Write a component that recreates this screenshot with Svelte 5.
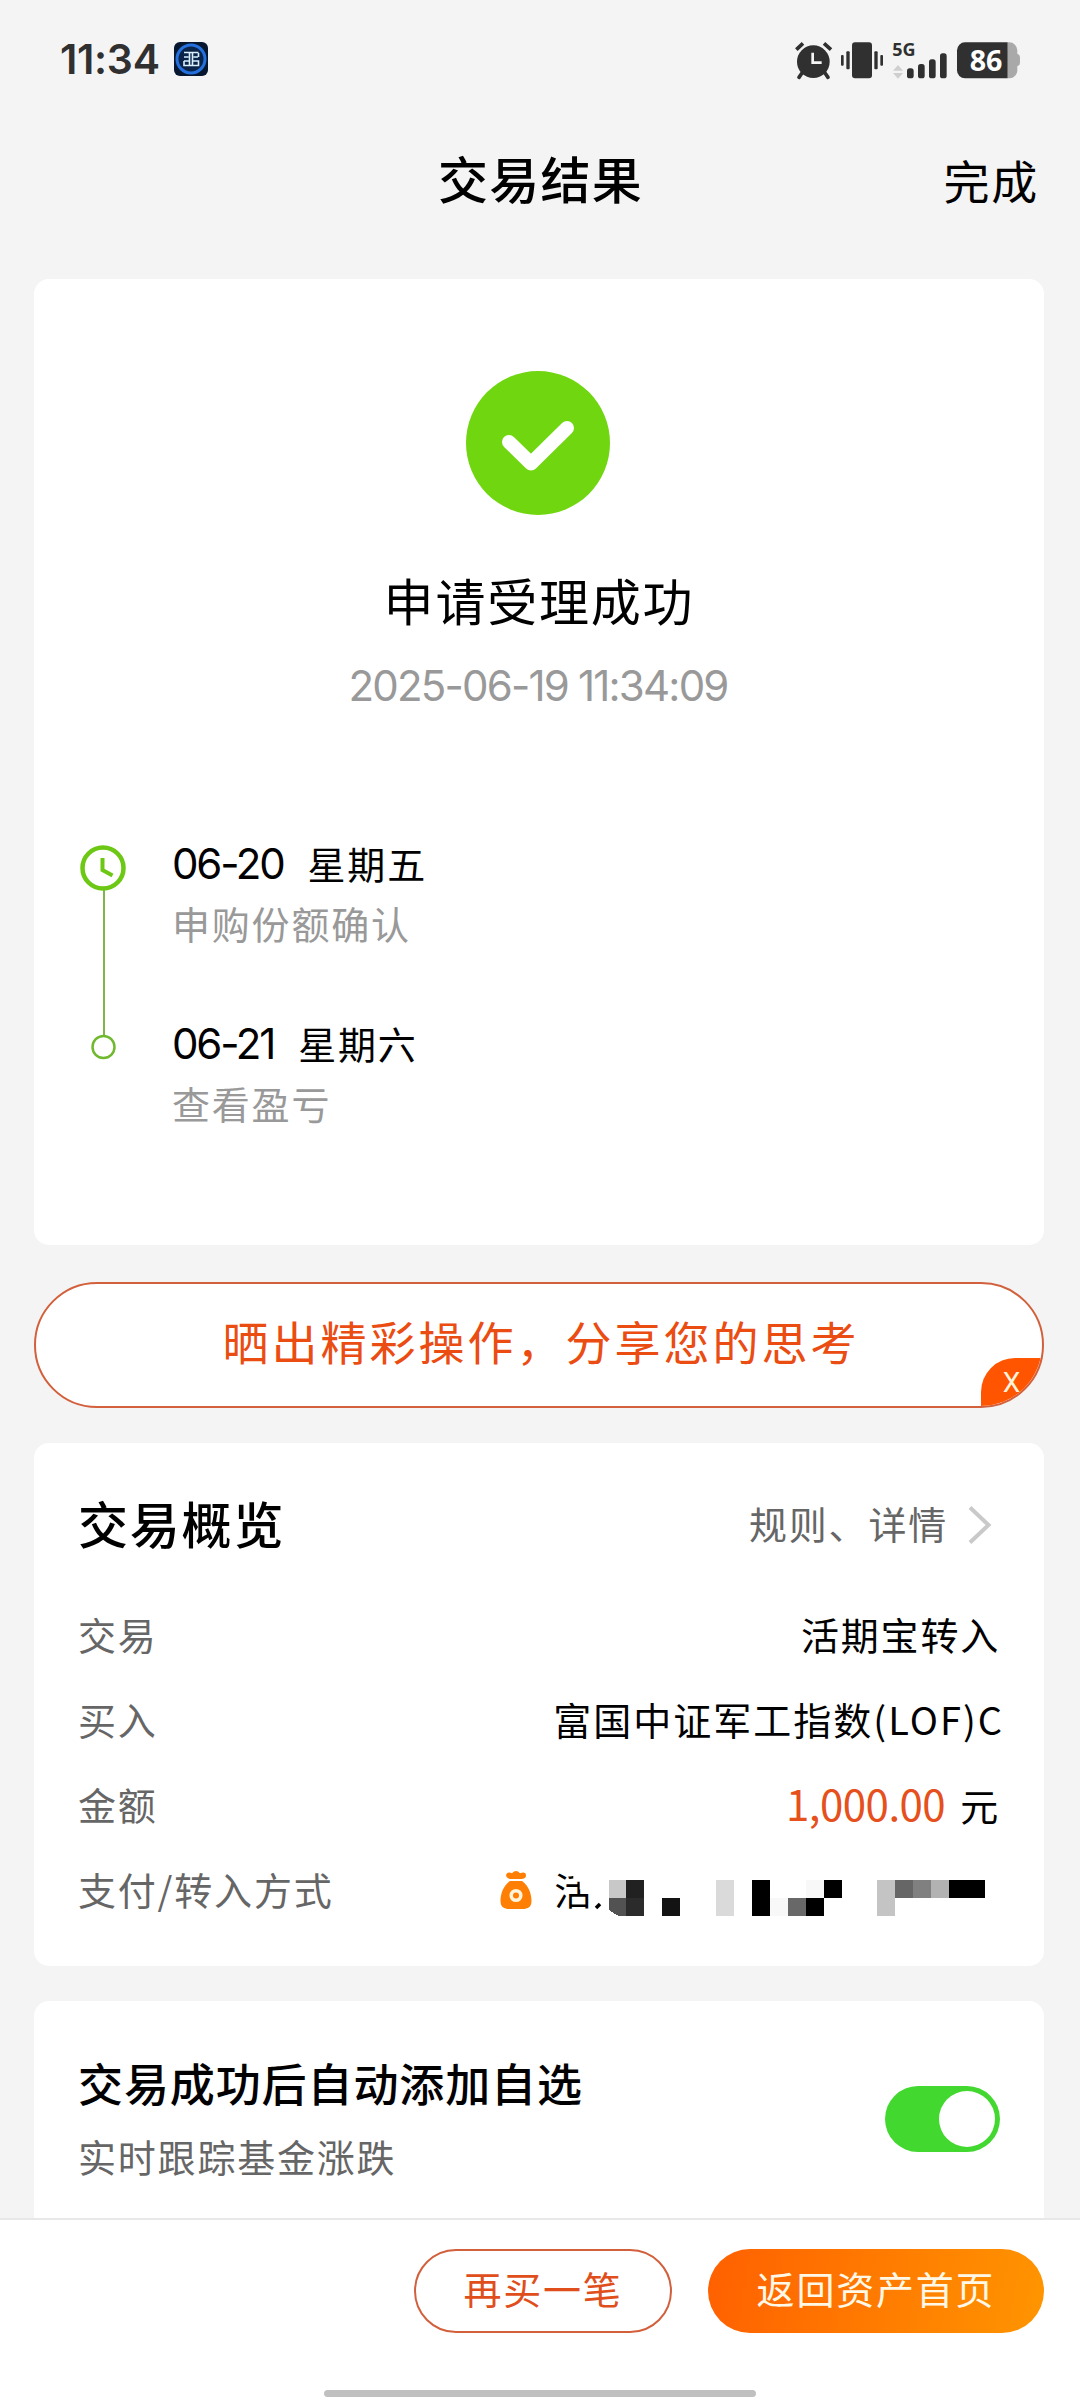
<script lang="ts">
	interface Step {
		date: string;
		weekday: string;
		note: string;
	}

	const steps: Step[] = [
		{ date: '06-20', weekday: '星期五', note: '申购份额确认' },
		{ date: '06-21', weekday: '星期六', note: '查看盈亏' }
	];

	// masked account name: [column, row, width, height, fill], one unit per tile
	const tiles: [number, number, number, number, string][] = [
		[0, 0, 1, 1, '#c8c8c8'],
		[1, 0, 1, 1, '#212121'],
		[1, 1, 1, 1, '#2b2b2b'],
		[3, 1, 1, 1, '#131313'],
		[6, 0, 1, 2, '#dadada'],
		[8, 0, 1, 2, '#000'],
		[9, 1, 1, 1, '#f8f8f8'],
		[10, 1, 1, 1, '#686868'],
		[11, 0, 1, 1, '#f8f8f8'],
		[11, 1, 1, 1, '#000'],
		[12, 0, 1, 1, '#000'],
		[15, 0, 1, 2, '#c4c4c4'],
		[16, 0, 1, 1, '#666'],
		[17, 0, 1, 1, '#808080'],
		[18, 0, 1, 1, '#b2b2b2'],
		[19, 0, 2, 1, '#000']
	];

	let autoWatch = $state(true);
	let bannerOpen = $state(true);
</script>

<div class="screen">
	<div class="status-bar">
		<span class="time">11:34</span>
		<svg class="app-icon" viewBox="0 0 34 34" aria-hidden="true">
			<rect width="34" height="34" rx="6" fill="#06172f" />
			<circle cx="17" cy="17" r="14" fill="#0a2348" stroke="#2470dc" stroke-width="3" />
			<path
				d="M10 10.500h14.500M10 15h4.500M19.500 15H24M24.500 11v4M15.500 11v12M18.500 11v12M10 19h5M19 19h5.500v4.500H10V19"
				fill="none"
				stroke="#d8f0ff"
				stroke-width="1.6"
			/>
		</svg>
		<div class="status-icons" aria-hidden="true">
			<svg class="alarm" viewBox="45 65 111 110" fill="none" stroke="#303030">
				<circle cx="100" cy="124" r="49" fill="#303030" stroke="none" />
				<path d="M49 88 69 69M132 69l21 19" stroke-width="11" />
				<path d="M66 158l-9 13M135 158l9 13" stroke-width="11" stroke-linecap="round" />
				<path d="M98 97v30h27" stroke="#f4f4f4" stroke-width="8" />
			</svg>
			<svg class="vibrate" viewBox="183 65 126 110" fill="#303030">
				<rect x="216" y="66" width="60" height="108" rx="9" />
				<rect x="199" y="93" width="10" height="54" rx="3" />
				<rect x="183" y="104" width="8" height="32" rx="3" />
				<rect x="283" y="93" width="10" height="54" rx="3" />
				<rect x="301" y="104" width="8" height="32" rx="3" />
			</svg>
			<svg class="signal" viewBox="336 65 165 110">
				<text x="337" y="107" font-size="54" font-weight="700" fill="#303030">5G</text>
				<path d="M339 151l15-17 15 17zM339 158l15 17 15-17z" fill="#cfcfcf" />
				<g fill="#303030">
					<rect x="381" y="144" width="20" height="30" rx="8" />
					<rect x="414" y="131" width="20" height="43" rx="8" />
					<rect x="447" y="117" width="20" height="57" rx="8" />
					<rect x="480" y="99" width="20" height="75" rx="8" />
				</g>
			</svg>
			<svg class="battery" viewBox="531 65 190 110">
				<path d="M683 66h5a24 24 0 0 1 24 24v10q8 2 8 10v18q0 8-8 10v10a24 24 0 0 1-24 26h-5z" fill="#a9a9a9" />
				<path d="M683 66H555a24 24 0 0 0-24 24v60a24 24 0 0 0 24 24h128z" fill="#303030" />
				<text x="569" y="151" font-size="86" font-weight="700" fill="#fff">86</text>
			</svg>
		</div>
	</div>

	<header class="nav-bar">
		<h1>交易结果</h1>
		<button type="button" class="done">完成</button>
	</header>

	<main>
		<section class="card result">
			<svg class="result-icon" viewBox="0 0 144 144" aria-hidden="true">
				<circle cx="72" cy="72" r="72" fill="#6fd60f" />
				<path
					d="M43 71 65 92.500 101 57"
					fill="none"
					stroke="#fff"
					stroke-width="14"
					stroke-linecap="round"
					stroke-linejoin="round"
				/>
			</svg>
			<h2>申请受理成功</h2>
			<time>2025-06-19 11:34:09</time>

			<div class="timeline">
				<svg class="rail" viewBox="0 0 48 220" fill="none" stroke="#6cc814" aria-hidden="true">
					<path d="M25 46v146" stroke="#7fb54a" stroke-width="2" />
					<circle cx="24" cy="24" r="20.500" stroke-width="4.500" />
					<path d="M23.500 14v12l10 5.500" stroke-width="4" />
					<circle cx="24.500" cy="203" r="11" stroke="#70b92e" stroke-width="2.500" />
				</svg>
				<ol>
					{#each steps as step (step.date)}
						<li>
							<p class="day"><b>{step.date}</b><span>{step.weekday}</span></p>
							<p class="note">{step.note}</p>
						</li>
					{/each}
				</ol>
			</div>
		</section>

		{#if bannerOpen}
			<div class="share-banner">
				<span>晒出精彩操作，分享您的思考</span>
				<button type="button" aria-label="关闭" onclick={() => (bannerOpen = false)}>X</button>
			</div>
		{/if}

		<section class="card overview">
			<div class="overview-head">
				<h2>交易概览</h2>
				<button type="button" class="details">
					规则、详情
					<svg viewBox="0 0 24 40" fill="none" stroke="#c9c9c9" stroke-width="4" aria-hidden="true">
						<path d="M2 2.500 20.500 20 2 37.500" />
					</svg>
				</button>
			</div>
			<dl>
				<div class="row">
					<dt>交易</dt>
					<dd>活期宝转入</dd>
				</div>
				<div class="row">
					<dt>买入</dt>
					<dd class="fund">富国中证军工指数(LOF)C</dd>
				</div>
				<div class="row">
					<dt>金额</dt>
					<dd><span class="amount">1,000.00</span>元</dd>
				</div>
				<div class="row">
					<dt>支付/转入方式</dt>
					<dd class="account">
						<svg class="bag" viewBox="0 0 32 40" aria-hidden="true">
							<path
								d="M10 9C5 8 5 3 9 2.500q2 0 3 .7Q16-1 20 3.200q6-2 6 2.300 0 3-4 3.500zM10 11h12c7 5 9.500 13 9.500 20 0 6-3.500 8-9 8h-13C4 39 .5 37 .5 31 .5 24 3 16 10 11z"
								fill="#ff7f05"
							/>
							<circle cx="16" cy="25.500" r="4.800" fill="none" stroke="#fff5dc" stroke-width="3.500" />
							<circle cx="16" cy="25.500" r="2" fill="#ff7f05" />
						</svg>
						<span class="clipped">活</span>
						<svg class="mosaic" viewBox="0 0 392 36" aria-hidden="true">
							<path d="M3 28 7 24" stroke="#000" stroke-width="3.500" />
							<g transform="translate(15.500 0) scale(17.930 18)" shape-rendering="crispEdges">
								<path d="M0 1h1v1H.55L0 1.650z" fill="#525252" />
								{#each tiles as [x, y, w, h, fill]}
									<rect {x} {y} width={w} height={h} {fill} />
								{/each}
							</g>
						</svg>
					</dd>
				</div>
			</dl>
		</section>

		<section class="card watch">
			<div>
				<h3>交易成功后自动添加自选</h3>
				<p>实时跟踪基金涨跌</p>
			</div>
			<button
				type="button"
				role="switch"
				class="switch"
				class:on={autoWatch}
				aria-checked={autoWatch}
				aria-label="自动添加自选"
				onclick={() => (autoWatch = !autoWatch)}><i></i></button
			>
		</section>
	</main>

	<footer>
		<div class="actions">
			<button type="button" class="outline">再买一笔</button>
			<button type="button" class="primary">返回资产首页</button>
		</div>
		<div class="home-indicator"></div>
	</footer>
</div>

<style>
	:global(body) {
		margin: 0;
		background: #f4f4f4;
	}

	.screen {
		display: flex;
		flex-direction: column;
		width: 1080px;
		height: 2400px;
		overflow: hidden;
		background: #f4f4f4;
		color: #000;
		font-family: 'Noto Sans CJK SC', sans-serif;
		font-size: 38px;
		letter-spacing: 1.8px;
	}

	h1,
	h2,
	h3,
	p,
	ol,
	dl,
	dd {
		margin: 0;
		padding: 0;
		list-style: none;
		font-weight: 400;
	}

	button {
		padding: 0;
		border: 0;
		background: none;
		color: inherit;
		font: inherit;
		letter-spacing: inherit;
		cursor: pointer;
	}

	svg {
		display: block;
		flex: none;
	}

	.status-bar {
		flex: none;
		display: flex;
		align-items: center;
		box-sizing: border-box;
		height: 118px;
		padding: 0 60px 0 60px;
	}

	.time {
		width: 114px;
		color: #303030;
		font: 600 41px/50px Inter, sans-serif;
		letter-spacing: -0.3px;
	}

	.app-icon {
		width: 34px;
		height: 34px;
	}

	.status-icons {
		display: flex;
		align-items: center;
		margin: 2px 0 0 auto;
	}

	.status-icons svg {
		height: 36.700px;
		overflow: visible;
	}

	.status-icons text {
		font-family: 'Noto Sans', sans-serif;
		letter-spacing: 0;
	}

	.alarm {
		width: 37px;
		margin-right: 9px;
	}

	.vibrate {
		width: 42px;
		margin-right: 9px;
	}

	.signal {
		width: 55px;
		margin-right: 10px;
	}

	.battery {
		width: 63.300px;
	}

	.nav-bar {
		flex: none;
		display: grid;
		grid-template-columns: 1fr auto 1fr;
		align-items: center;
		height: 118px;
		margin-bottom: 43px;
		padding: 0 41px 0 42px;
	}

	h1 {
		grid-column: 2;
		font-size: 50px;
		font-weight: 500;
		letter-spacing: 1.2px;
	}

	.done {
		justify-self: end;
		margin-top: 4px;
		font-size: 46px;
	}

	main {
		flex: 1;
		min-height: 0;
		display: flex;
		flex-direction: column;
		overflow: hidden;
		padding: 0 36px 0 34px;
	}

	.card {
		flex: none;
		box-sizing: border-box;
		border-radius: 15px;
		background: #fff;
	}

	.result {
		display: flex;
		flex-direction: column;
		align-items: center;
		height: 966px;
		margin-bottom: 37px;
		padding: 92px 26px 0 45px;
	}

	.result-icon {
		width: 144px;
		height: 144px;
		margin-right: 21px;
	}

	.result h2 {
		margin: 48px 19px 0 0;
		font-size: 50px;
		line-height: 72px;
	}

	.result time {
		margin: 21px 21px 0 0;
		color: #999;
		font-family: Inter, sans-serif;
		font-size: 42px;
		line-height: 60px;
		letter-spacing: -1.800px;
	}

	.timeline {
		display: flex;
		gap: 45px;
		align-self: stretch;
		margin-top: 128px;
	}

	.rail {
		width: 48px;
		height: 220px;
	}

	.timeline ol {
		display: flex;
		flex-direction: column;
		gap: 60px;
		margin-top: -11px;
	}

	.day {
		display: flex;
		align-items: baseline;
		gap: 24px;
		height: 60px;
		line-height: 60px;
	}

	.day b {
		font-family: Inter, sans-serif;
		font-size: 42px;
		font-weight: 400;
		letter-spacing: -2.200px;
	}

	.note {
		height: 60px;
		color: #999;
		line-height: 60px;
	}

	.share-banner {
		position: relative;
		flex: none;
		box-sizing: border-box;
		height: 126px;
		margin-bottom: 35px;
		padding-left: 4px;
		border: 2px solid #d2603c;
		border-radius: 63px;
		overflow: hidden;
		background: #fff;
		color: #ea4c12;
		font-size: 46px;
		line-height: 113px;
		letter-spacing: 3px;
		text-align: center;
	}

	.share-banner button {
		position: absolute;
		right: 0;
		bottom: 0;
		width: 61px;
		height: 48px;
		border-radius: 34px 0 0;
		background: #ff5500;
		color: #fff3dc;
		font-family: Roboto, sans-serif;
		font-size: 28px;
		line-height: 49px;
		letter-spacing: 0;
	}

	.overview {
		height: 523px;
		margin-bottom: 35px;
		padding: 39px 44px 0 44px;
	}

	.overview-head {
		display: flex;
		align-items: center;
		justify-content: space-between;
		height: 80px;
		margin-bottom: 29px;
	}

	.overview h2 {
		font-size: 50px;
		font-weight: 500;
	}

	.details {
		display: flex;
		align-items: center;
		gap: 20px;
		padding-right: 8px;
		color: #666;
	}

	.details svg {
		width: 24px;
		height: 40px;
		margin-top: 5px;
	}

	.row {
		display: flex;
		align-items: center;
		justify-content: space-between;
		height: 85px;
	}

	.row dt {
		color: #666;
	}

	.row dd {
		line-height: 56px;
	}

	.row .fund {
		margin-right: -4px;
		letter-spacing: 2px;
	}

	.amount {
		margin-right: 15px;
		color: #e5501c;
		font-size: 42px;
		letter-spacing: -0.5px;
	}

	.account {
		display: flex;
		align-items: center;
	}

	.bag {
		width: 32px;
		height: 40px;
		margin: 2px 22px 0 0;
	}

	.clipped {
		clip-path: polygon(0 0, 48% 0, 48% 38%, 64% 38%, 64% 52%, 100% 52%, 100% 100%, 0 100%);
	}

	.mosaic {
		width: 392px;
		height: 36px;
		margin: 18px 15px 0 -1px;
	}

	.watch {
		display: flex;
		justify-content: space-between;
		height: 300px;
		padding: 50px 44px 0 44px;
	}

	.watch h3 {
		font-size: 45px;
		font-weight: 500;
		line-height: 64px;
		letter-spacing: 0.900px;
	}

	.watch p {
		margin-top: 13px;
		color: #666;
		line-height: 56px;
	}

	.switch {
		box-sizing: border-box;
		display: flex;
		width: 115px;
		height: 66px;
		margin-top: 35px;
		padding: 5px;
		border-radius: 33px;
		background: #d8d8d8;
	}

	.switch.on {
		justify-content: flex-end;
		background: #42d82f;
	}

	.switch i {
		width: 56px;
		height: 56px;
		border-radius: 50%;
		background: #fff;
	}

	footer {
		flex: none;
		display: flex;
		flex-direction: column;
		align-items: center;
		justify-content: space-between;
		box-sizing: border-box;
		height: 182px;
		padding: 29px 36px 3px;
		border-top: 2px solid #e8e8e8;
		background: #fff;
	}

	.actions {
		display: flex;
		align-self: stretch;
		justify-content: flex-end;
		gap: 36px;
	}

	.actions button {
		box-sizing: border-box;
		height: 84px;
		padding-bottom: 8px;
		border-radius: 42px;
	}

	.outline {
		width: 258px;
		border: 2px solid #d2603c;
		color: #e04e1b;
	}

	.primary {
		width: 336px;
		background: linear-gradient(100deg, #ff6000, #ff9500);
		color: #fff8e6;
	}

	.home-indicator {
		width: 432px;
		height: 7px;
		border-radius: 4px;
		background: #c0c0c0;
	}
</style>
